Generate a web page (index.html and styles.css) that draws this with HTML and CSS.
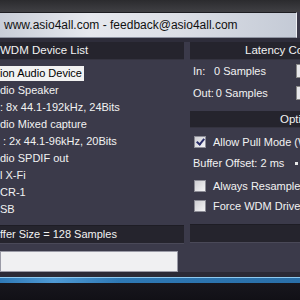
FILE: index.html
```html
<!DOCTYPE html>
<html lang="en">
  <head>
    <meta charset="UTF-8" />
    <title>ASIO4ALL</title>
    <link rel="stylesheet" href="styles.css">
  </head>
  <body>
    <div class="top-strip"></div>
    <div class="url-bar">www.asio4all.com - feedback@asio4all.com</div>

    <div class="main">
      <div class="left">
        <div class="head">WDM Device List</div>
        <ul class="devices">
          <li><span class="selected">ion Audio Device</span></li>
          <li>dio Speaker</li>
          <li>: 8x 44.1-192kHz, 24Bits</li>
          <li>dio Mixed capture</li>
          <li class="sub">: 2x 44.1-96kHz, 20Bits</li>
          <li>dio SPDIF out</li>
          <li>l X-Fi</li>
          <li>CR-1</li>
          <li>SB</li>
        </ul>
        <div class="status">ffer Size = 128 Samples</div>
        <div class="field"></div>
      </div>

      <div class="right">
        <div class="head head-right">Latency Compensation</div>
        <div class="lat-row">
          <span class="lat-label">In:</span>
          <span>0 Samples</span>
          <span class="spin"></span>
        </div>
        <div class="lat-row">
          <span class="lat-label">Out:</span>
          <span>0 Samples</span>
          <span class="spin"></span>
        </div>
        <div class="head head-right opt">Options</div>
        <label class="check-row first">
          <span class="box checked"></span>Allow Pull Mode (WaveRT)
        </label>
        <div class="offset-row">
          Buffer Offset: 2 ms
          <span class="thumb"></span>
        </div>
        <label class="check-row">
          <span class="box"></span>Always Resample 44.1kHz &lt;-&gt; 48kHz
        </label>
        <label class="check-row">
          <span class="box"></span>Force WDM Driver To 16 Bit
        </label>
        <div class="status"></div>
      </div>
    </div>

    <div class="footer">
      <div class="blue-line"></div>
    </div>
  </body>
</html>
```

FILE: styles.css
```css
body {
  margin: 0;
  width: 300px;
  height: 300px;
  overflow: hidden;
  background: #3b3a4a;
  font-family: "Liberation Sans", Arial, sans-serif;
  font-size: 11px;
  color: #f2f2f2;
}
.top-strip {
  height: 12px;
  background: linear-gradient(#2b2b2e, #404044);
}
.url-bar {
  width: 292px;
  height: 24px;
  padding-left: 4px;
  line-height: 24px;
  font-size: 12px;
  color: #111;
  white-space: nowrap;
  background: linear-gradient(90deg, #c9ced8 0%, #e6e8ee 30%, #dcdfe6 60%, #c4cad6 100%);
  border-top: 1px solid #1d1d22;
  border-bottom: 1px solid #8d92a0;
  border-right: 1px solid #eef0f4;
}
.main {
  display: flex;
  gap: 6px;
  height: 230px;
  padding-top: 4px;
  background: linear-gradient(#2e2d3a 0, #2e2d3a 4px, #3b3a4a 4px);
}
.left {
  width: 184px;
  flex-shrink: 0;
  display: flex;
  flex-direction: column;
}
.right {
  flex: 1;
  min-width: 0;
  display: flex;
  flex-direction: column;
  white-space: nowrap;
  overflow: hidden;
}
.head {
  height: 17px;
  line-height: 17px;
  font-size: 11.5px;
  background: #25242d;
  border-bottom: 1px solid #34333f;
  white-space: nowrap;
  overflow: hidden;
}
.head-right {
  padding-left: 55px;
}
.head.opt {
  height: 16px;
  line-height: 16px;
  margin-top: 7px;
  padding-left: 90px;
}
.devices {
  list-style: none;
  margin: 5px 0 0;
  padding: 0;
}
.devices li {
  height: 17px;
  line-height: 17px;
  white-space: nowrap;
}
.devices li.sub {
  padding-left: 3px;
}
.selected {
  display: inline-block;
  height: 15px;
  line-height: 15px;
  padding-right: 2px;
  background: #f2f2f2;
  color: #000;
}
.status {
  height: 17px;
  line-height: 17px;
  margin-top: 7px;
  background: #25242d;
  border-top: 1px solid #1e1d25;
  border-bottom: 1px solid #4a4958;
  white-space: nowrap;
}
.right .status {
  margin-top: auto;
  margin-bottom: 29px;
}
.field {
  width: 176px;
  height: 19px;
  margin-top: 7px;
  background: #f0f0f2;
  border: 1px solid #9a9aa6;
}
.lat-row {
  display: flex;
  align-items: center;
  height: 22px;
  padding-left: 3px;
}
.lat-row:first-of-type {
  margin-top: 2px;
}
.lat-label {
  min-width: 19px;
  margin-right: 2px;
}
.spin {
  width: 10px;
  height: 12px;
  margin-left: auto;
  margin-right: -8px;
  background: #e8e8ec;
  border: 1px solid #888;
}
.check-row {
  display: flex;
  align-items: center;
  height: 20px;
  padding-left: 4px;
  gap: 7px;
}
.check-row.first {
  margin-top: 4px;
}
.offset-row {
  display: flex;
  align-items: center;
  height: 22px;
  padding-left: 3px;
  margin-bottom: 2px;
}
.thumb {
  width: 3px;
  height: 3px;
  margin-left: auto;
  margin-right: 2px;
  background: #e8e8e8;
}
.box {
  position: relative;
  flex-shrink: 0;
  width: 10px;
  height: 10px;
  border: 1px solid #8c8c96;
  background: linear-gradient(135deg, #cfcfd4, #f4f4f6);
}
.box.checked::after {
  content: "";
  position: absolute;
  left: 3px;
  top: 0;
  width: 3px;
  height: 6px;
  border: solid #2a2e6a;
  border-width: 0 2px 2px 0;
  transform: rotate(40deg);
}
.footer {
  height: 28px;
  padding-top: 5px;
  box-sizing: border-box;
  background: linear-gradient(#2b2a36 0, #2b2a36 5px, #17161d 11px, #111016 100%);
}
.blue-line {
  height: 5px;
  border-top: 1px solid #8fcaf0;
  background: linear-gradient(90deg, #2f79b6 0%, #4f9ad4 18%, #2e78b4 40%, #2a6fa8 100%);
}
```
